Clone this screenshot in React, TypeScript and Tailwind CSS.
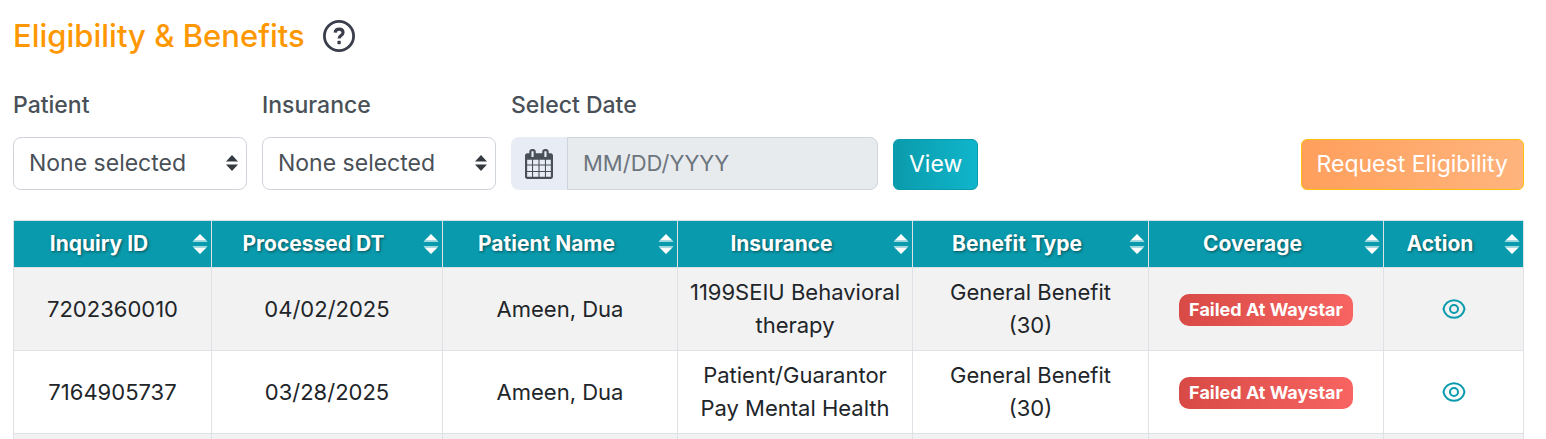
import type { ReactNode } from 'react';

const columns = [
  { title: 'Inquiry ID', width: 'w-[198px]' },
  { title: 'Processed DT', width: 'w-[231px]' },
  { title: 'Patient Name', width: 'w-[235px]' },
  { title: 'Insurance', width: 'w-[235px]' },
  { title: 'Benefit Type', width: 'w-[236px]' },
  { title: 'Coverage', width: 'w-[235px]' },
  { title: 'Action', width: 'w-[140px]' },
];

const inquiries = [
  {
    id: '7202360010',
    processed: '04/02/2025',
    patient: 'Ameen, Dua',
    insurance: '1199SEIU Behavioral therapy',
    benefit: 'General Benefit (30)',
    coverage: 'Failed At Waystar',
  },
  {
    id: '7164905737',
    processed: '03/28/2025',
    patient: 'Ameen, Dua',
    insurance: 'Patient/Guarantor Pay Mental Health',
    benefit: 'General Benefit (30)',
    coverage: 'Failed At Waystar',
  },
];

function HelpIcon() {
  return (
    <svg className="w-8 h-8" viewBox="0 0 32 32" fill="none" stroke="currentColor">
      <circle cx="16" cy="16" r="14.6" strokeWidth="2.8" />
      <path d="M12.200 12.600c.2-2.300 1.700-3.400 3.900-3.400 2.300 0 3.900 1.200 3.900 3.200 0 1.500-.8 2.300-2 3.100-1.400 1-1.900 1.500-1.900 3.100" strokeWidth="3.200" />
      <rect x="14.400" y="20.800" width="3.400" height="3.400" rx="1" fill="currentColor" stroke="none" />
    </svg>
  );
}

function CalendarIcon() {
  return (
    <svg className="w-7 h-[30px]" viewBox="0 0 1664 1792" preserveAspectRatio="none" fill="currentColor">
      <path d="M128 1664h288v-288h-288v288zM480 1664h320v-288h-320v288zM128 1312h288v-320h-288v320zM480 1312h320v-320h-320v320zM128 928h288v-288h-288v288zM864 1664h320v-288h-320v288zM480 928h320v-288h-320v288zM1248 1664h288v-288h-288v288zM864 1312h320v-320h-320v320zM512 448v-288q0-13-9.5-22.5t-22.5-9.5h-64q-13 0-22.5 9.5t-9.5 22.5v288q0 13 9.5 22.5t22.5 9.5h64q13 0 22.5-9.5t9.5-22.5zM1248 1312h288v-320h-288v320zM864 928h320v-288h-320v288zM1248 928h288v-288h-288v288zM1280 448v-288q0-13-9.5-22.5t-22.5-9.5h-64q-13 0-22.5 9.5t-9.5 22.5v288q0 13 9.5 22.5t22.5 9.5h64q13 0 22.5-9.5t9.5-22.5zM1664 384v1280q0 52-38 90t-90 38h-1408q-52 0-90-38t-38-90v-1280q0-52 38-90t90-38h128v-96q0-66 47-113t113-47h64q66 0 113 47t47 113v96h384v-96q0-66 47-113t113-47h64q66 0 113 47t47 113v96h128q52 0 90 38t38 90z" />
    </svg>
  );
}

function EyeIcon() {
  return (
    <svg className="w-6 h-5" viewBox="0 0 24 20" fill="none" stroke="currentColor" strokeWidth="2">
      <path d="M1.500 10C2.500 4.500 7 1.200 12 1.200S21.500 4.500 22.500 10C21.500 15.500 17 18.800 12 18.800S2.500 15.500 1.500 10z" />
      <circle cx="12" cy="10" r="4" />
    </svg>
  );
}

function SortIcon() {
  return (
    <svg className="w-4 h-5 shrink-0" viewBox="0 0 16 20" fill="currentColor">
      <path d="M8 0l6.500 6.500h-13zM8 20l-6.500-6.500h13z" />
      <path d="M1.500 6.500h13l1 1.500H.5zM1.500 13.500h13l1-1.500H.5z" opacity="0.6" />
    </svg>
  );
}

function SelectField({ id, label }: { id: string; label: string }) {
  return (
    <div className="w-[234px]">
      <label htmlFor={id} className="block mb-4 text-[23px] leading-8 font-medium">
        {label}
      </label>
      <div className="relative">
        <select
          id={id}
          className="block w-full h-[53px] pl-[15px] pr-8 rounded-lg border border-[#ced4da] bg-white appearance-none text-[23px]"
        >
          <option>None selected</option>
        </select>
        <svg
          className="absolute right-[9px] top-[18px] w-3 h-4 text-[#343a40] pointer-events-none"
          viewBox="0 0 12 16"
          fill="currentColor"
        >
          <path d="M6 0l6 6.500H0zM6 16L0 9.500h12z" />
        </svg>
      </div>
    </div>
  );
}

function Cell({ children }: { children?: ReactNode }) {
  return <td className="border border-[#dee2e6] px-2 py-2">{children}</td>;
}

export default function App() {
  return (
    <main className="h-screen overflow-hidden bg-white pl-[13px] pr-[22px] pt-4 font-[Inter,sans-serif] text-[#495057]">
      <header className="flex items-center gap-[18px]">
        <h1 className="text-[31px] leading-10 font-medium text-[#ff9800]">Eligibility &amp; Benefits</h1>
        <button type="button" aria-label="Help" className="text-[#3a3f4b]">
          <HelpIcon />
        </button>
      </header>

      {/* Filters */}
      <form className="mt-[33px] flex items-end gap-[15px]">
        <SelectField id="patient" label="Patient" />
        <SelectField id="insurance" label="Insurance" />
        <div className="w-[367px]">
          <label htmlFor="date" className="block mb-4 text-[23px] leading-8 font-medium">
            Select Date
          </label>
          <div className="flex h-[53px]">
            <span className="flex w-14 items-center justify-center rounded-l-lg bg-[#e8edf5]">
              <CalendarIcon />
            </span>
            <input
              id="date"
              type="text"
              readOnly
              placeholder="MM/DD/YYYY"
              className="min-w-0 flex-1 px-[15px] rounded-r-lg border border-[#ced4da] bg-[#e8ebee] text-[22px] placeholder:text-[#6c757d]"
            />
          </div>
        </div>
        <button
          type="button"
          className="h-[51px] px-[15px] rounded-md border border-[#099bad] bg-linear-to-r from-[#0a9bac] to-[#10b5cb] text-[23px] text-white"
        >
          View
        </button>
        <button
          type="button"
          className="ml-auto h-[51px] px-[15px] rounded-md border border-[#ffc107] bg-linear-to-r from-[#ff9f5c] to-[#ffb47d] text-[23px] text-white"
        >
          Request Eligibility
        </button>
      </form>

      {/* Results */}
      <table className="mt-[30px] w-full table-fixed border-collapse text-center text-[22px] leading-[33px] text-[#212529]">
        <colgroup>
          {columns.map((col) => (
            <col key={col.title} className={col.width} />
          ))}
        </colgroup>
        <thead>
          <tr className="h-[47px] bg-[#099bad] text-[21px] text-white">
            {columns.map((col) => (
              <th key={col.title} className="border border-[#dee2e6] pl-1 pr-[3px] font-bold">
                <button type="button" className="flex w-full items-center">
                  <span className="flex-1 pr-3 pb-[2px] text-shadow-[1px_1px_3px_#00000080]">{col.title}</span>
                  <SortIcon />
                </button>
              </th>
            ))}
          </tr>
        </thead>
        <tbody>
          {inquiries.map((row) => (
            <tr key={row.id} className="odd:bg-[#f2f2f2]">
              <Cell>{row.id}</Cell>
              <Cell>{row.processed}</Cell>
              <Cell>{row.patient}</Cell>
              <Cell>{row.insurance}</Cell>
              <Cell>
                <div className="px-4">{row.benefit}</div>
              </Cell>
              <Cell>
                <span className="inline-block px-[10px] rounded-[10px] bg-linear-to-r from-[#d84a45] to-[#f76462] text-[18px] leading-8 font-bold text-white align-middle">
                  {row.coverage}
                </span>
              </Cell>
              <Cell>
                <a href="#" aria-label={`View inquiry ${row.id}`} className="flex justify-center text-[#099bad]">
                  <EyeIcon />
                </a>
              </Cell>
            </tr>
          ))}
          <tr className="h-[84px] bg-[#f2f2f2]">
            {columns.map((col) => (
              <Cell key={col.title} />
            ))}
          </tr>
        </tbody>
      </table>
    </main>
  );
}
